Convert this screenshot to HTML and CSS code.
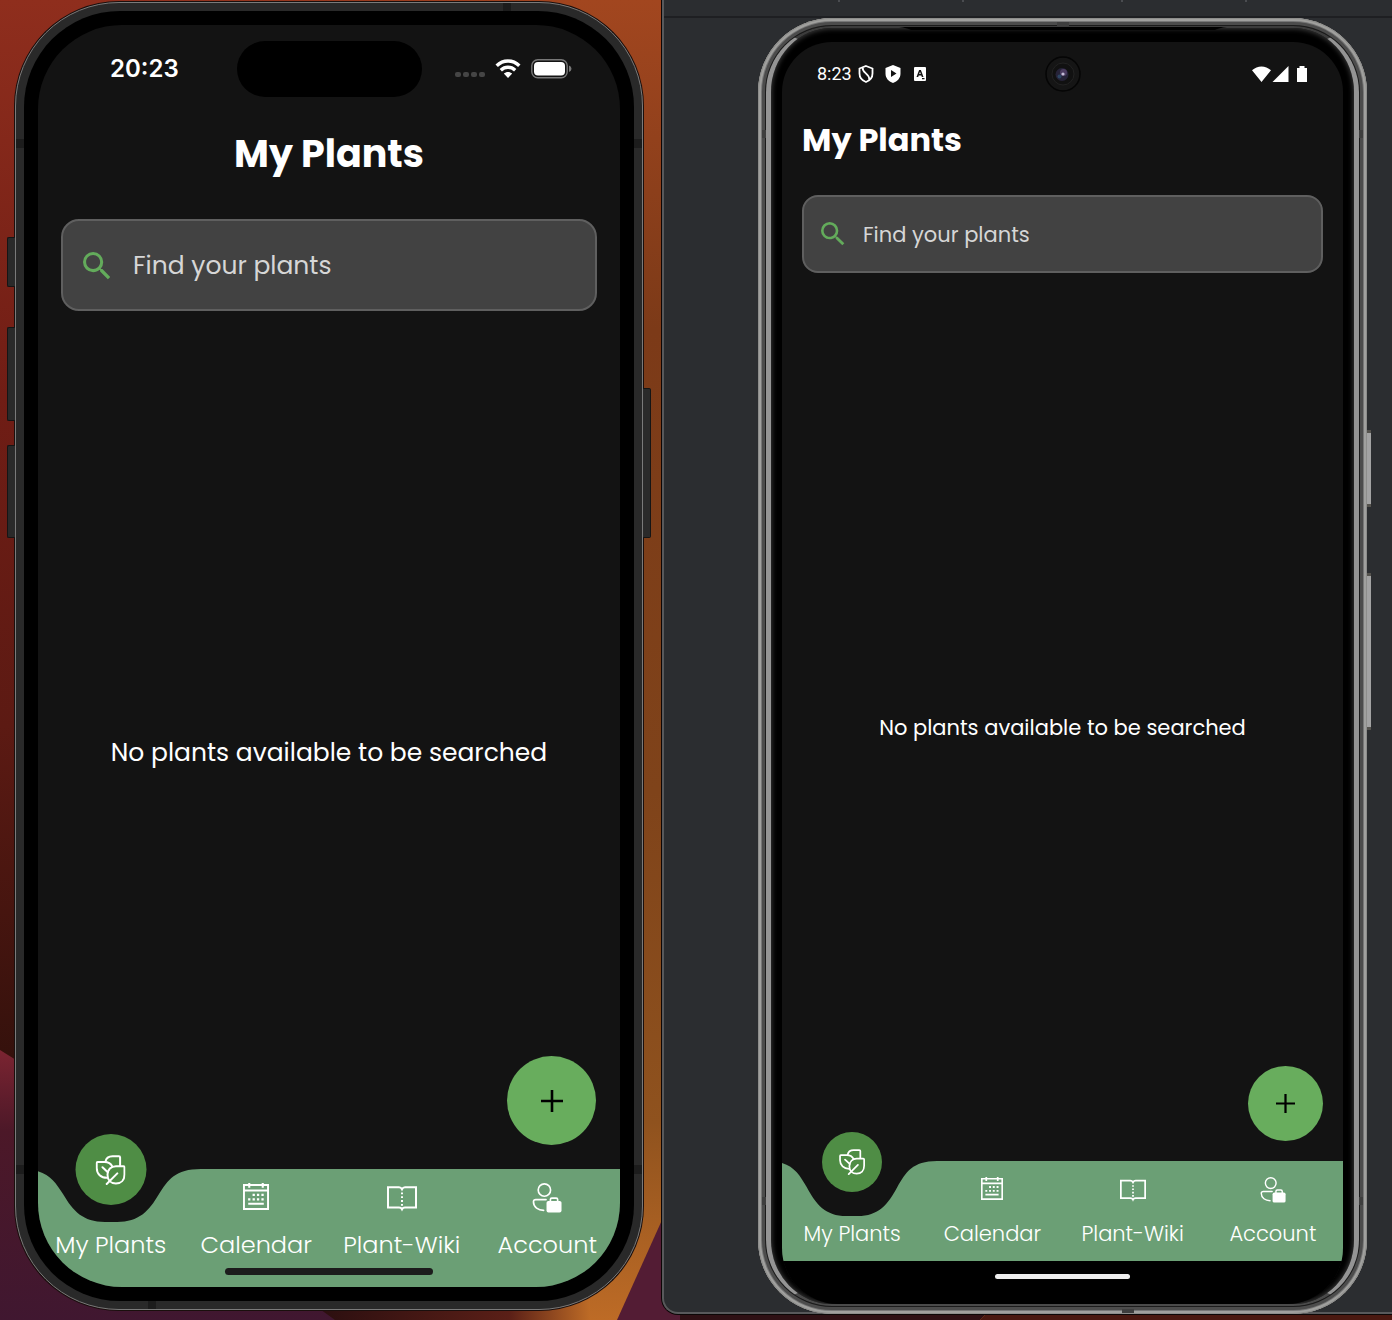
FILE: index.html
```html
<!DOCTYPE html>
<html lang="en">
<head>
<meta charset="utf-8">
<meta name="viewport" content="width=device-width, initial-scale=1">
<title>My Plants</title>
<link rel="stylesheet" href="styles.css">
</head>
<body>
<svg class="sprite" aria-hidden="true">
  <symbol id="search" viewBox="3 3 18 18"><path fill="currentColor" d="M15.5 14h-.79l-.28-.27A6.47 6.47 0 0 0 16 9.5 6.5 6.5 0 1 0 9.5 16c1.61 0 3.09-.59 4.23-1.57l.27.28v.79l5 4.99L20.49 19l-4.99-5zm-6 0C7.01 14 5 11.99 5 9.5S7.01 5 9.5 5 14 7.01 14 9.5 11.99 14 9.5 14z"/></symbol>
  <symbol id="plus" viewBox="0 0 22 22"><path d="M11 0V22M0 11H22" stroke="currentColor" stroke-width="2.6"/></symbol>
  <symbol id="leaves" viewBox="0 0 30 30"><g fill="none" stroke="currentColor" stroke-width="2" stroke-linecap="round" stroke-linejoin="round"><path d="M10 6.6C10.6 3 13.6 1.2 17 1.2H23.4Q24.6 1.2 24.6 2.4V10.6"/><path d="M16.8 11.5C15.3 8.4 12.4 7 9 7H2.2Q1.2 7 1.2 8V13C1.2 19 5.6 22.8 11.5 22.8"/><path d="M20.4 11.2H28Q29 11.2 29 12.2V19.4C29 25 25.5 28.5 20.4 28.5S12 25 12 19.8 15.5 11.2 20.4 11.2Z"/><path d="M11.2 29L21.8 18.4M7 12.3L12.3 17.2"/></g></symbol>
  <symbol id="calendar" viewBox="0 0 25 26"><path fill="none" stroke="currentColor" stroke-width="1.9" d="M.9 1.9H24.1V25H.9ZM.9 7.2H24.1M5 20H20"/><path stroke="currentColor" stroke-width="2" d="M6 0V4.5M19 0V4.5"/><path stroke="currentColor" stroke-width="2.2" d="M9.2 11.4h2.2M13.4 11.4h2.2M17.7 11.4h2.2M4.9 15.7h2.2M9.2 15.7h2.2M13.4 15.7h2.2M17.7 15.7h2.2"/></symbol>
  <symbol id="book" viewBox="0 0 30 24"><path fill="none" stroke="currentColor" stroke-width="2" d="M1 1.2H12Q14 1.2 15 3.2Q16 1.2 18 1.2H29V21.5H18Q15.8 21.5 15 23.2Q14.2 21.5 12 21.5H1Z"/><path stroke="currentColor" stroke-width="2" stroke-dasharray="1.8 2" d="M15 6.5V20"/></symbol>
  <symbol id="account" viewBox="0 0 30 31"><g fill="none" stroke="currentColor" stroke-width="1.7" stroke-linecap="round"><circle cx="12.3" cy="7.3" r="6.4"/><path d="M14 17.2H3.5Q1 17.2 1 19.5C1 25 6 28.3 11.5 28.3M18.5 19V17Q18.5 15.6 20 15.6H24.5Q26 15.6 26 17V19"/></g><rect x="14.5" y="18.5" width="15.5" height="12" rx="2" fill="currentColor"/></symbol>
  <symbol id="notch" viewBox="0 0 180 53" preserveAspectRatio="none"><path fill="currentColor" d="M0 0C26 0 33 11 42 25C52 42 62 53 84 53H96C118 53 128 42 138 25C147 11 154 0 180 0Z"/></symbol>
</svg>

<svg class="wallpaper" viewBox="0 0 1392 1320" preserveAspectRatio="none" aria-hidden="true">
  <defs>
    <linearGradient id="red" x1="0" y1="0" x2="0" y2="1"><stop offset="0" stop-color="#8f2e1d"/><stop offset=".3" stop-color="#701d15"/><stop offset=".55" stop-color="#5c1a13"/><stop offset=".8" stop-color="#35110c"/><stop offset="1" stop-color="#2c0f10"/></linearGradient>
    <linearGradient id="orange" x1="0" y1="0" x2="0" y2="1"><stop offset="0" stop-color="#a2461f"/><stop offset=".25" stop-color="#7c3a18"/><stop offset=".6" stop-color="#7f431a"/><stop offset=".85" stop-color="#8f521e"/><stop offset="1" stop-color="#bd6b26"/></linearGradient>
    <linearGradient id="mix" x1="0" y1="0" x2="1" y2="0"><stop offset="0" stop-color="#fff" stop-opacity="0"/><stop offset="1" stop-color="#fff"/></linearGradient>
    <mask id="fade"><rect x="100" width="480" height="1320" fill="url(#mix)"/><rect x="579" width="813" height="1320" fill="#fff"/></mask>
    <linearGradient id="plum" x1="0" y1="0" x2="0" y2="1"><stop offset="0" stop-color="#7b2431"/><stop offset=".3" stop-color="#4c1828"/><stop offset="1" stop-color="#401730"/></linearGradient>
    <linearGradient id="ember" x1="0" y1="0" x2="1" y2="0"><stop offset="0" stop-color="#2c0f10"/><stop offset=".7" stop-color="#5a1f17"/><stop offset="1" stop-color="#bd6b26"/></linearGradient>
  </defs>
  <rect width="1392" height="1320" fill="url(#red)"/>
  <rect width="1392" height="1320" fill="url(#orange)" mask="url(#fade)"/>
  <path fill="url(#ember)" d="M320 1300H590V1320H320Z"/>
  <path fill="url(#plum)" d="M0 1050L40 1075V1250L310 1302L335 1320H0Z"/>
  <path fill="#531c34" d="M617 1320L662 1220L700 1320Z"/>
  <path fill="#2e1014" d="M680 1310H990L980 1320H680Z"/>
  <path fill="#4a1810" d="M990 1310H1392V1320H980Z"/>
</svg>

<div class="desktop">
  <section class="simulator" aria-label="iOS simulator">
    <div class="phone ios">
      <i class="key key-action"></i><i class="key key-up"></i><i class="key key-down"></i><i class="key key-power"></i>
      <i class="band band-left-top"></i><i class="band band-left-bottom"></i><i class="band band-right-top"></i><i class="band band-right-bottom"></i><i class="band band-top"></i><i class="band band-bottom"></i>
      <div class="bezel">
        <div class="screen">
          <header class="status">
            <span class="time">20:23</span>
            <span class="island"></span>
            <span class="signals">
              <svg width="30" height="6" viewBox="0 0 30 6" class="dots"><g fill="#454545"><rect width="6" height="5" rx="2"/><rect x="8" width="6" height="5" rx="2"/><rect x="16" width="6" height="5" rx="2"/><rect x="24" width="6" height="5" rx="2"/></g></svg>
              <svg width="26" height="20" viewBox="0 0 26 20"><g fill="none" stroke="#fff" stroke-width="3.4"><path d="M1.7 6.8C8 .4 18 .4 24.3 6.8"/><path d="M5.8 11.2C10 7.3 16 7.3 20.2 11.2"/></g><path fill="#fff" d="M13 19L8.8 14.6C11.3 12.5 14.7 12.5 17.2 14.6Z"/></svg>
              <svg width="41" height="20" viewBox="0 0 41 20"><rect x=".8" y=".8" width="35.4" height="18" rx="6" fill="none" stroke="#777" stroke-width="1.4"/><rect x="3" y="3" width="31" height="13.6" rx="4" fill="#fff"/><path fill="#777" d="M38 6.5Q40.5 7.5 40.5 9.8T38 13Z"/></svg>
            </span>
          </header>
          <h1>My Plants</h1>
          <label class="search"><svg class="search-icon"><use href="#search"/></svg><input type="search" placeholder="Find your plants" aria-label="Find your plants"></label>
          <main class="content"><p>No plants available to be searched</p><button class="fab" type="button" aria-label="Add plant"><svg><use href="#plus"/></svg></button></main>
          <nav class="tabs">
            <a href="#plants" class="tab active"><svg class="notch"><use href="#notch"/></svg><span class="bubble"><svg class="icon"><use href="#leaves"/></svg></span><span class="label">My Plants</span></a>
            <a href="#calendar-tab" class="tab"><svg class="icon small"><use href="#calendar"/></svg><span class="label">Calendar</span></a>
            <a href="#wiki" class="tab"><svg class="icon"><use href="#book"/></svg><span class="label">Plant-Wiki</span></a>
            <a href="#account-tab" class="tab"><svg class="icon"><use href="#account"/></svg><span class="label">Account</span></a>
          </nav>
          <span class="home"></span>
        </div>
      </div>
    </div>
  </section>

  <section class="emulator" aria-label="Android emulator">
    <div class="toolbar"><i></i><i></i><i></i><i></i></div>
    <div class="phone android">
      <i class="key key-power"></i><i class="key key-volume"></i>
      <i class="band band-left-top"></i><i class="band band-left-bottom"></i><i class="band band-right-top"></i><i class="band band-right-bottom"></i><i class="band band-top"></i><i class="band band-bottom"></i>
      <svg class="speaker" viewBox="0 0 328 5" preserveAspectRatio="none"><path fill="#000" d="M0 0H328Q320 1 316 3H12Q8 1 0 0Z"/></svg>
      <div class="screen">
        <header class="status">
          <span class="time">8:23</span>
          <svg width="16" height="18" viewBox="0 0 16 18"><path fill="none" stroke="#fff" stroke-width="1.8" d="M8 1L14.5 3.5V8.5C14.5 12.5 12 15.5 8 17C4 15.5 1.5 12.5 1.5 8.5V3.5ZM4.8 2.5C3.5 8 11.5 8 11.3 14.5"/></svg>
          <svg class="play" width="16" height="18" viewBox="0 0 16 18"><path fill="#fff" fill-rule="evenodd" d="M8 0L15.5 3V8.5C15.5 13 12.5 16.5 8 18C3.5 16.5.5 13 .5 8.5V3ZM6 5V12L11.5 8.5Z"/></svg>
          <svg class="box" width="12" height="14" viewBox="0 0 12 14"><path fill="#fff" fill-rule="evenodd" d="M1 0H11Q12 0 12 1V13Q12 14 11 14H1Q0 14 0 13V1Q0 0 1 0ZM2.5 10H4.2L4.7 8.5H7.3L7.8 10H9.5L6.9 3H5.1ZM5.2 7.1L6 4.8L6.8 7.1ZM8 11V12.3H10.5V11Z"/></svg>
          <span class="camera"><svg width="36" height="36" viewBox="0 0 36 36"><circle cx="18" cy="18" r="17" fill="#151515" stroke="#050505" stroke-width="1.5"/><circle cx="18" cy="18" r="11" fill="#111" stroke="#222"/><circle cx="17" cy="18.5" r="6.5" fill="#262338"/><circle cx="18.5" cy="16.5" r="3.5" fill="#4b3b60"/><circle cx="14.5" cy="20.5" r="2" fill="#2d4664"/><circle cx="18" cy="18" r="1.6" fill="#c4bdd8"/></svg></span>
          <span class="signals"><svg width="56" height="16" viewBox="0 0 56 16"><path fill="#fff" d="M9.5 16L0 4.3C5.5-.9 13.5-.9 19 4.3ZM20.5 16L36.5 0V16ZM45 2H47.5V0H52.5V2H55V16H45Z"/></svg></span>
        </header>
        <h1>My Plants</h1>
        <label class="search"><svg class="search-icon"><use href="#search"/></svg><input type="search" placeholder="Find your plants" aria-label="Find your plants"></label>
        <main class="content"><p>No plants available to be searched</p><button class="fab" type="button" aria-label="Add plant"><svg><use href="#plus"/></svg></button></main>
        <nav class="tabs">
          <a href="#plants" class="tab active"><svg class="notch"><use href="#notch"/></svg><span class="bubble"><svg class="icon"><use href="#leaves"/></svg></span><span class="label">My Plants</span></a>
          <a href="#calendar-tab" class="tab"><svg class="icon small"><use href="#calendar"/></svg><span class="label">Calendar</span></a>
          <a href="#wiki" class="tab"><svg class="icon"><use href="#book"/></svg><span class="label">Plant-Wiki</span></a>
          <a href="#account-tab" class="tab"><svg class="icon"><use href="#account"/></svg><span class="label">Account</span></a>
        </nav>
        <footer class="gesture"><span class="home"></span></footer>
      </div>
    </div>
  </section>
</div>
</body>
</html>
```

FILE: styles.css
```css
* { box-sizing: border-box; }
body {
  margin: 0;
  position: relative;
  min-height: 100vh;
  display: grid;
  grid-template-columns: minmax(0, 1fr);
  background: #35110c;
  color: #fff;
  font-family: Poppins, Inter, "Open Sans", sans-serif;
}
svg { display: block; flex: none; }
.sprite { position: absolute; width: 0; height: 0; }
.wallpaper { position: absolute; inset: 0; width: 100%; height: 100%; }

.desktop {
  position: relative;
  display: grid;
  grid-template-columns: minmax(0, 331fr) minmax(0, 365fr);
  overflow: hidden;
}
.simulator { display: flex; padding: 2px 19px 10px 15px; }
.emulator {
  display: flex;
  flex-direction: column;
  margin-bottom: 6px;
  border: solid #58595b;
  border-width: 0 0 2px 2px;
  border-bottom-left-radius: 16px;
  background: #2b2d30;
  box-shadow: 0 0 0 1px #0c0606;
}
.toolbar {
  height: 18px;
  padding: 0 145px 0 174px;
  display: flex;
  justify-content: space-between;
  border-bottom: 2px solid #1e1f22;
}
.toolbar i { width: 2px; height: 2px; background: #4a4c50; }
.toolbar i:nth-child(2) { margin-right: 34px; }

/* Shared app layout */
.phone { position: relative; flex: 1; display: flex; min-width: 0; }
.key, .band { position: absolute; }
.screen {
  position: relative;
  flex: 1;
  min-width: 0;
  display: flex;
  flex-direction: column;
  overflow: hidden;
  background: #131313;
}
h1 { margin: 0; font-weight: 700; }
.search {
  display: flex;
  align-items: center;
  border: 2px solid #5f5f5f;
  background: #424242;
}
.search-icon { color: #63ab5b; }
.search input {
  flex: 1;
  min-width: 0;
  padding: 0;
  border: 0;
  outline: 0;
  background: none;
  color: #fff;
  font: inherit;
}
.search input::placeholder { color: #d6d6d6; opacity: 1; }
.content {
  position: relative;
  flex: 1;
  display: flex;
  align-items: center;
  justify-content: center;
}
.content p { margin: 0; }
.fab {
  position: absolute;
  display: grid;
  place-items: center;
  padding: 0;
  border: 0;
  border-radius: 50%;
  background: #68ad5d;
  color: #000;
}
.tabs {
  display: grid;
  grid-template-columns: repeat(4, minmax(0, 1fr));
  background: #6b9f75;
}
.tab {
  position: relative;
  display: flex;
  flex-direction: column;
  align-items: center;
  justify-content: space-between;
  color: #fff;
  text-decoration: none;
  font-weight: 300;
}
.active { justify-content: flex-end; }
.label { position: relative; white-space: nowrap; }
.notch {
  position: absolute;
  top: 0;
  left: 50%;
  transform: translateX(-50%);
  color: #131313;
}
.bubble {
  position: absolute;
  left: 50%;
  transform: translateX(-50%);
  display: grid;
  place-items: center;
  border-radius: 50%;
  background: #4f8d45;
}

/* iOS device */
.ios {
  padding: 8px;
  border: 1px solid #7a7a7a;
  border-radius: 104px;
  background: #292929;
  box-shadow: 0 0 0 1px #1a0f0d;
}
.ios .key { left: -9px; width: 8px; border: solid #151515; border-width: 1px 0 1px 1px; border-radius: 2px 0 0 2px; background: #2a2a2a; }
.ios .key-action { top: 234px; height: 50px; }
.ios .key-up { top: 324px; height: 94px; }
.ios .key-down { top: 442px; height: 93px; }
.ios .key-power { left: auto; right: -9px; top: 385px; height: 150px; border-width: 1px 1px 1px 0; border-radius: 0 2px 2px 0; }
.ios .band { width: 8px; height: 9px; background: #1c1c1c; }
.band-left-top, .band-left-bottom { left: 0; }
.ios .band-right-top, .ios .band-right-bottom { right: 0; }
.ios .band-left-top, .ios .band-right-top { top: 136px; }
.ios .band-left-bottom, .ios .band-right-bottom { bottom: 135px; }
.ios .band-top { top: 0; right: 131px; height: 8px; }
.ios .band-bottom { bottom: 0; left: 132px; height: 8px; }
.bezel { flex: 1; min-width: 0; display: flex; padding: 14px; border-radius: 96px; background: #000; }
.ios .screen { border-radius: 84px; }
.ios .status {
  display: grid;
  grid-template-columns: minmax(0, 1fr) 185px minmax(0, 1fr);
  align-items: center;
  padding-top: 16px;
}
.ios .time { padding-left: 72px; font: 600 24px/30px Inter, sans-serif; }
.island { height: 56px; border-radius: 28px; background: #000; }
.ios .signals { display: flex; align-items: center; justify-content: flex-end; gap: 10px; padding-right: 48px; }
.dots { margin-top: 12px; }
.ios h1 { margin-top: 33px; text-align: center; font-size: 38px; line-height: 48px; }
.ios .search { height: 92px; margin: 41px 23px 0; padding: 2px 20px 0; gap: 22px; border-radius: 18px; font-size: 25px; }
.ios .search-icon { width: 28px; height: 28px; }
.ios .content { padding-top: 26px; font-size: 25px; }
.ios .fab { width: 89px; height: 89px; right: 24px; bottom: 24px; }
.ios .fab svg { width: 22px; height: 22px; }
.ios .tabs { height: 118px; padding-bottom: 26px; }
.ios .tab { padding-top: 14px; font-size: 24px; line-height: 32px; }
.ios .notch { width: 180px; height: 53px; }
.ios .bubble { top: -35px; width: 71px; height: 71px; }
.ios .icon { width: 30px; height: 30px; }
.ios .small { height: 27px; width: 26px; }
.ios .home {
  position: absolute;
  bottom: 12px;
  left: 50%;
  width: 208px;
  height: 7px;
  transform: translateX(-50%);
  border-radius: 4px;
  background: #1c1c1c;
}

/* Android device */
.android {
  margin: 0 25px -2px 94px;
  padding: 24px 24px 10px;
  border-radius: 74px;
  background: #000;
  box-shadow:
    inset 0 0 0 1px #8d8d8b,
    inset 0 0 0 3px #a0a09e,
    inset 0 0 0 4px #777,
    inset 0 0 0 7px #4c4c4c,
    inset 0 0 0 8px #1b1b1b;
}
.android::before {
  content: "";
  position: absolute;
  inset: 8px;
  border: solid;
  border-width: 2px 5px;
  border-color: #3c3c3c #949494 #4a4a4a;
  border-radius: 66px;
  box-shadow: inset 0 0 5px 1px #3a3a3a;
}
.android .key { right: -4px; width: 4px; border: solid #55534e; border-width: 3px 0; background: #a3a3a3; }
.android .key-power { top: 412px; height: 77px; }
.android .key-volume { top: 555px; height: 157px; }
.android .band { width: 4px; height: 8px; background: #3e3e3e; }
.android .band-left-top { left: 4px; top: 112px; }
.android .band-right-top { right: 4px; top: 112px; }
.android .band-left-bottom { left: 4px; bottom: 109px; }
.android .band-right-bottom { right: 4px; bottom: 109px; }
.android .band-top { top: 4px; left: 50%; width: 12px; height: 4px; transform: translateX(-50%); }
.android .band-bottom { bottom: 1px; right: 233px; width: 12px; height: 4px; }
.speaker { position: absolute; top: 9px; left: 50%; width: 328px; height: 5px; transform: translateX(-50%); }
.android .screen { border-radius: 50px 50px 56px 56px; }
.android .status {
  position: relative;
  display: flex;
  align-items: center;
  height: 64px;
  padding: 0 35px;
}
.android .time { margin-right: 6px; font: 400 18px/24px Roboto, sans-serif; }
.play { margin-left: 11px; }
.box { margin-left: 13px; }
.camera { position: absolute; left: 50%; transform: translateX(-50%); }
.android .signals { margin-left: auto; }
.android h1 { margin: 14px 20px 0; font-size: 32px; line-height: 40px; }
.android .search { height: 78px; margin: 35px 20px 0; padding: 0 17px; gap: 18px; border-radius: 16px; font-size: 21px; }
.android .search-icon { width: 24px; height: 24px; }
.android .content { padding-top: 20px; font-size: 21px; }
.android .fab { width: 75px; height: 75px; right: 20px; bottom: 20px; }
.android .fab svg { width: 19px; height: 19px; }
.android .tabs { height: 100px; padding-bottom: 13px; }
.android .tab { padding-top: 16px; font-size: 21px; line-height: 28px; }
.android .notch { width: 170px; height: 55px; }
.android .bubble { top: -29px; width: 60px; height: 60px; }
.android .icon { width: 26px; height: 26px; }
.android .small { width: 22px; height: 23px; }
.gesture { display: flex; justify-content: center; align-items: flex-start; height: 43px; padding-top: 13px; background: #000; }
.gesture .home { width: 135px; height: 5px; border-radius: 3px; background: #eee; }
```
